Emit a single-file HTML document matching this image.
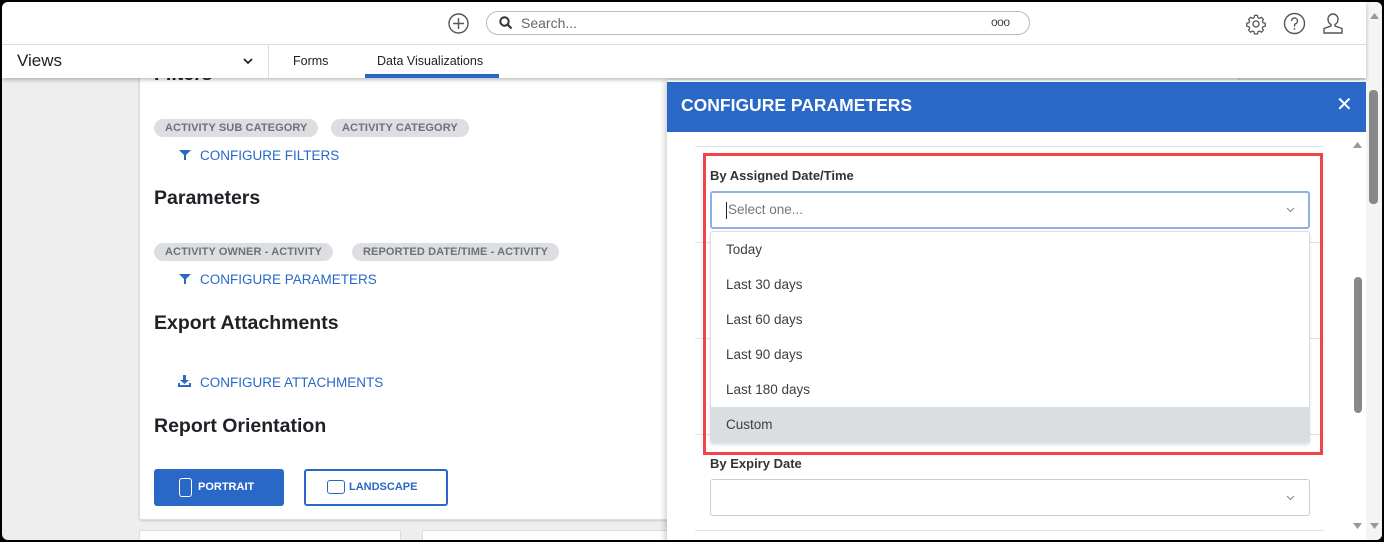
<!DOCTYPE html>
<html><head><style>
*{box-sizing:border-box;margin:0;padding:0}
body{width:1384px;height:542px;overflow:hidden;background:#000;font-family:"Liberation Sans",sans-serif;position:relative}
.a{position:absolute}
.frame{position:absolute;left:2px;top:2px;width:1380px;height:538px;background:#eee;border-radius:6px;overflow:hidden}
.chip{position:absolute;height:18px;background:#dcdee1;border-radius:9px;color:#6d7278;font-size:11px;line-height:18px;padding:0 11px;font-weight:bold;letter-spacing:.1px}
.lnk{position:absolute;color:#2a68c8;font-size:13.5px}
.h{position:absolute;font-size:19.5px;font-weight:bold;color:#1e2125}
.sep{position:absolute;left:693px;width:629px;height:1px;background:#dfe1e4}
.opt{position:absolute;left:0;width:599px;height:35px;line-height:35px;padding-left:15px;font-size:13.5px;color:#3a3f45}
</style></head><body>
<div class="frame">
 <div class="a" style="left:0;top:0;width:1364px;height:76px;background:#fff;box-shadow:0 2px 4px rgba(0,0,0,.25);z-index:2">
  <div class="a" style="left:0;top:42px;width:1364px;height:1px;background:#dcdcdc"></div>
  <svg class="a" style="left:446px;top:11px" width="21" height="21" viewBox="0 0 21 21"><circle cx="10.5" cy="10.5" r="9.5" fill="none" stroke="#555" stroke-width="1.4"/><path d="M10.5 5v11M5 10.5h11" stroke="#555" stroke-width="1.4"/></svg>
  <div class="a" style="left:484px;top:9px;width:544px;height:24px;border:1px solid #bbb;border-radius:12px"></div>
  <svg class="a" style="left:497px;top:14px" width="14" height="14" viewBox="0 0 14 14"><circle cx="5.5" cy="5.5" r="4.2" fill="none" stroke="#333" stroke-width="2"/><path d="M8.5 8.5l4 4" stroke="#333" stroke-width="2.2"/></svg>
  <div class="a" style="left:519px;top:13px;font-size:14px;color:#666">Search...</div>
  <div class="a" style="left:989px;top:13px;font-size:12px;color:#444;letter-spacing:-.5px">ooo</div>
  <svg class="a" style="left:1243px;top:11px" width="22" height="22" viewBox="0 0 24 24"><path fill="none" stroke="#555" stroke-width="1.4" d="M12 2.5l1.6.2.5 2.4 1.6.8 2.2-1.2 2.2 2.2-1.2 2.2.8 1.6 2.4.5v3.2l-2.4.5-.8 1.6 1.2 2.2-2.2 2.2-2.2-1.2-1.6.8-.5 2.4h-3.2l-.5-2.4-1.6-.8-2.2 1.2-2.2-2.2 1.2-2.2-.8-1.6-2.4-.5v-3.2l2.4-.5.8-1.6-1.2-2.2 2.2-2.2 2.2 1.2 1.6-.8.5-2.4z"/><circle cx="12" cy="12" r="3.3" fill="none" stroke="#555" stroke-width="1.4"/></svg>
  <svg class="a" style="left:1281px;top:10px" width="23" height="23" viewBox="0 0 23 23"><circle cx="11.5" cy="11.5" r="10" fill="none" stroke="#555" stroke-width="1.4"/><path d="M8.5 9a3 3 0 1 1 4 2.8c-.8.4-1 1-1 2v.8" fill="none" stroke="#555" stroke-width="1.4"/><circle cx="11.5" cy="17" r=".9" fill="#555"/></svg>
  <svg class="a" style="left:1320px;top:10px" width="22" height="23" viewBox="0 0 22 23"><path d="M11 2a5 5 0 0 0-5 5c0 2.4 1.3 4.6 3 5.5v1.5L2 16.5V21h18v-4.5L13 14v-1.5c1.7-.9 3-3.1 3-5.5a5 5 0 0 0-5-5z" fill="none" stroke="#555" stroke-width="1.4"/></svg>
  <div class="a" style="left:15px;top:49px;font-size:17px;color:#222">Views</div>
  <svg class="a" style="left:241px;top:56px" width="10" height="7" viewBox="0 0 10 7"><path d="M1 1l4 4 4-4" fill="none" stroke="#222" stroke-width="1.8"/></svg>
  <div class="a" style="left:266px;top:43px;width:1px;height:33px;background:#ddd"></div>
  <div class="a" style="left:291px;top:52px;font-size:12.5px;color:#222">Forms</div>
  <div class="a" style="left:375px;top:52px;font-size:12.5px;color:#222">Data Visualizations</div>
  <div class="a" style="left:363px;top:72px;width:134px;height:4px;background:#2a68c8"></div>
 </div>
 <div class="a" style="left:137px;top:60px;width:1100px;height:458px;background:#fff;border:1px solid #ddd;border-radius:3px;box-shadow:0 1px 2px rgba(0,0,0,.15)"></div>
 <div class="a" style="left:137px;top:528px;width:262px;height:20px;background:#fff;border:1px solid #ddd"></div>
 <div class="a" style="left:420px;top:528px;width:260px;height:20px;background:#fff;border:1px solid #ddd"></div>
 <div class="h" style="left:152px;top:61px">Filters</div>
 <div class="chip" style="left:152px;top:117px">ACTIVITY SUB CATEGORY</div>
 <div class="chip" style="left:329px;top:117px">ACTIVITY CATEGORY</div>
 <svg class="a" style="left:177px;top:147px" width="12" height="12" viewBox="0 0 12 12"><path d="M0 1h12L7 6v5H5V6z" fill="#2a68c8"/></svg>
 <div class="lnk" style="left:198px;top:146px">CONFIGURE FILTERS</div>
 <div class="h" style="left:152px;top:185px">Parameters</div>
 <div class="chip" style="left:152px;top:241px">ACTIVITY OWNER - ACTIVITY</div>
 <div class="chip" style="left:350px;top:241px">REPORTED DATE/TIME - ACTIVITY</div>
 <svg class="a" style="left:177px;top:271px" width="12" height="12" viewBox="0 0 12 12"><path d="M0 1h12L7 6v5H5V6z" fill="#2a68c8"/></svg>
 <div class="lnk" style="left:198px;top:270px">CONFIGURE PARAMETERS</div>
 <div class="h" style="left:152px;top:310px">Export Attachments</div>
 <svg class="a" style="left:176px;top:373px" width="13" height="12" viewBox="0 0 13 12"><path d="M5 0h3v5h3L6.5 9 2 5h3z" fill="#2a68c8"/><path d="M0 8h2v2h9V8h2v4H0z" fill="#2a68c8"/></svg>
 <div class="lnk" style="left:198px;top:373px">CONFIGURE ATTACHMENTS</div>
 <div class="h" style="left:152px;top:413px">Report Orientation</div>
 <div class="a" style="left:152px;top:467px;width:130px;height:37px;background:#2a68c8;border-radius:3px"></div>
 <div class="a" style="left:177px;top:476px;width:13px;height:19px;border:1.5px solid #fff;border-radius:3px"></div>
 <div class="a" style="left:196px;top:479px;color:#fff;font-size:11px;font-weight:bold">PORTRAIT</div>
 <div class="a" style="left:302px;top:467px;width:144px;height:37px;border:2px solid #2a68c8;border-radius:3px;background:#fff"></div>
 <div class="a" style="left:325px;top:478px;width:18px;height:14px;border:1.5px solid #2a68c8;border-radius:3px"></div>
 <div class="a" style="left:347px;top:479px;color:#2a68c8;font-size:11px;font-weight:bold">LANDSCAPE</div>
 <div class="a" style="left:665px;top:78px;width:699px;height:470px;background:#fff;box-shadow:-2px 0 6px rgba(0,0,0,.2)"></div>
 <div class="a" style="left:665px;top:80px;width:699px;height:50px;background:#2a68c8"></div>
 <div class="a" style="left:679px;top:93px;color:#fff;font-size:17.5px;font-weight:bold">CONFIGURE PARAMETERS</div>
 <div class="a" style="left:1334px;top:90px;color:#fff;font-size:20px">✕</div>
 <div class="sep" style="top:144px"></div>
 <div class="sep" style="top:240px"></div>
 <div class="sep" style="top:336px"></div>
 <div class="sep" style="top:432px"></div>
 <div class="sep" style="top:528px"></div>
 <div class="a" style="left:701px;top:151px;width:620px;height:302px;border:3px solid #f0444a"></div>
 <div class="a" style="left:708px;top:166px;font-size:13px;font-weight:bold;color:#333">By Assigned Date/Time</div>
 <div class="a" style="left:708px;top:189px;width:600px;height:38px;border:2px solid #8fb0e3;border-radius:3px;background:#fff"></div>
 <div class="a" style="left:724px;top:200px;width:1px;height:17px;background:#222"></div>
 <div class="a" style="left:726px;top:200px;font-size:13.5px;color:#777">Select one...</div>
 <svg class="a" style="left:1284px;top:205px" width="9" height="6" viewBox="0 0 9 6"><path d="M1 1l3.5 3.5L8 1" fill="none" stroke="#888" stroke-width="1"/></svg>
 <div class="a" style="left:708px;top:229px;width:600px;height:212px;background:#fff;border:1px solid #ddd;border-radius:3px;box-shadow:0 2px 3px rgba(0,0,0,.12)">
  <div class="opt" style="top:0">Today</div>
  <div class="opt" style="top:35px">Last 30 days</div>
  <div class="opt" style="top:70px">Last 60 days</div>
  <div class="opt" style="top:105px">Last 90 days</div>
  <div class="opt" style="top:140px">Last 180 days</div>
  <div class="opt" style="top:175px;background:#dbdee1">Custom</div>
 </div>
 <div class="a" style="left:708px;top:454px;font-size:13px;font-weight:bold;color:#333">By Expiry Date</div>
 <div class="a" style="left:708px;top:477px;width:600px;height:37px;border:1px solid #ccc;border-radius:3px;background:#fff"></div>
 <svg class="a" style="left:1284px;top:493px" width="9" height="6" viewBox="0 0 9 6"><path d="M1 1l3.5 3.5L8 1" fill="none" stroke="#888" stroke-width="1"/></svg>
 <div class="a" style="left:1348px;top:130px;width:16px;height:410px;background:#fff"></div>
 <svg class="a" style="left:1351px;top:140px" width="9" height="6"><path d="M0 6h9L4.5 0z" fill="#999"/></svg>
 <div class="a" style="left:1352px;top:275px;width:8px;height:136px;background:#888;border-radius:4px"></div>
 <svg class="a" style="left:1351px;top:521px" width="9" height="6"><path d="M0 0h9L4.5 6z" fill="#999"/></svg>
 <div class="a" style="left:1364px;top:0;width:16px;height:540px;background:#f4f4f4"></div>
 <svg class="a" style="left:1368px;top:11px" width="9" height="6"><path d="M0 6h9L4.5 0z" fill="#999"/></svg>
 <div class="a" style="left:1367px;top:88px;width:9px;height:114px;background:#888;border-radius:4px"></div>
 <svg class="a" style="left:1368px;top:521px" width="9" height="6"><path d="M0 0h9L4.5 6z" fill="#999"/></svg>
</div>
</body></html>
